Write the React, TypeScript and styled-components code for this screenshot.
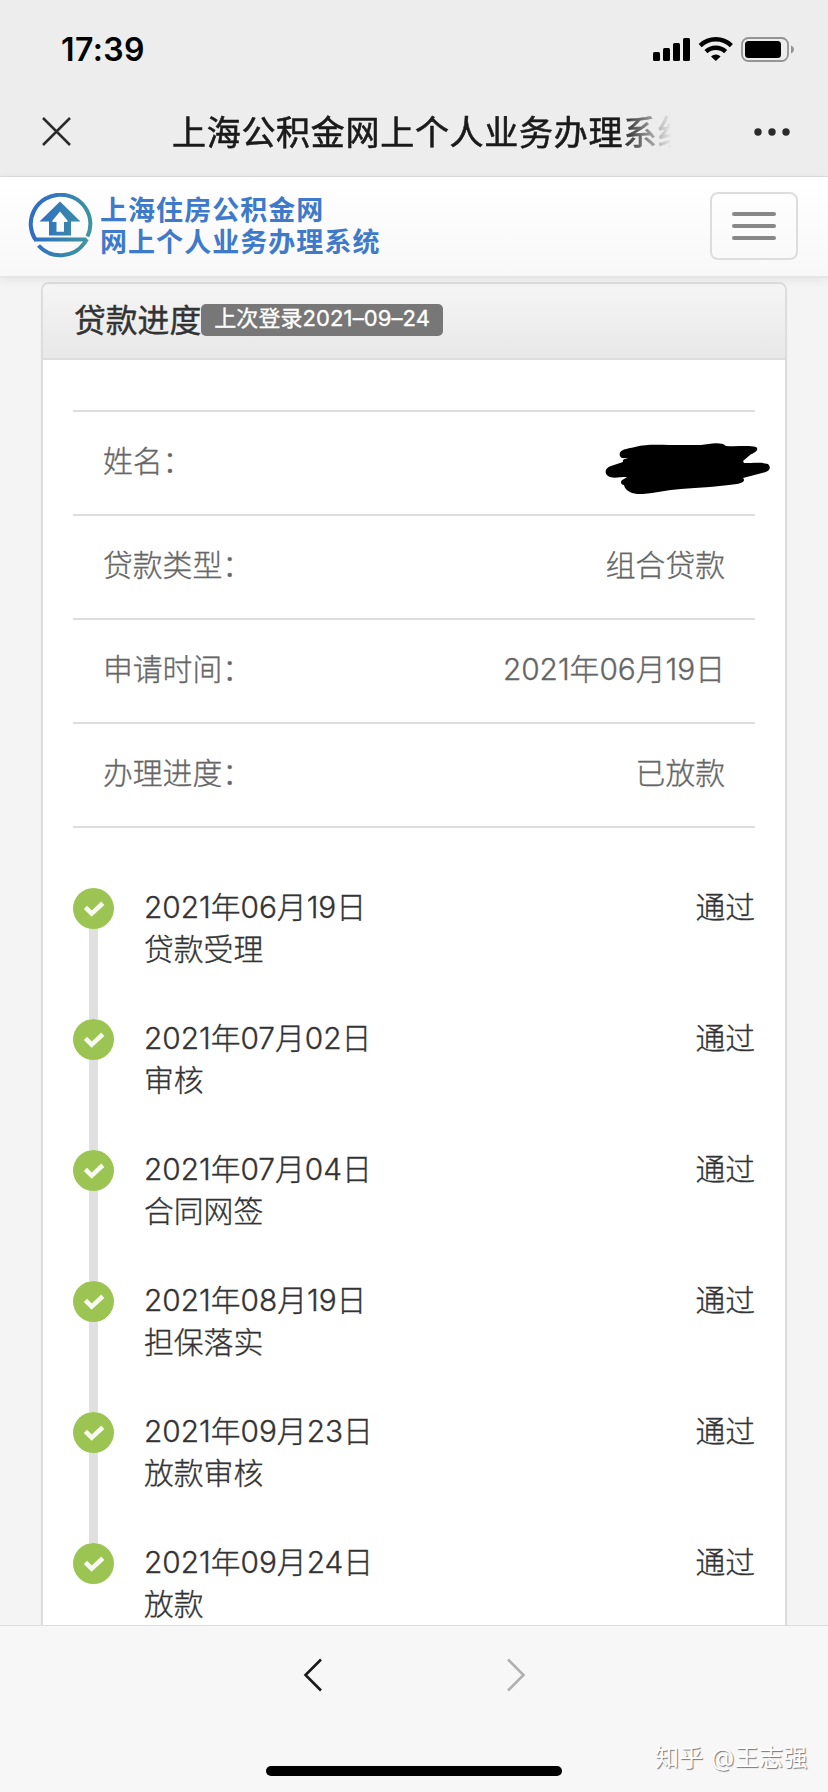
import React from 'react';
import styled, { createGlobalStyle } from 'styled-components';

const GlobalStyle = createGlobalStyle`
  * { box-sizing: border-box; }
  html, body { margin: 0; padding: 0; }
  body {
    background: #f4f4f4;
    font-family: Inter, 'Noto Sans CJK SC', sans-serif;
    overflow: hidden;
  }
`;

const Screen = styled.div`
  position: relative;
  display: flex;
  flex-direction: column;
  width: 828px;
  height: 1792px;
  background: #f4f4f4;
  overflow: hidden;
`;

const StatusBar = styled.div`
  display: flex;
  flex: none;
  justify-content: space-between;
  align-items: center;
  height: 88px;
  padding: 12px 33px 0 61px;
  background: #ededed;
`;

const Clock = styled.span`
  font-size: 32px;
  font-weight: 600;
  line-height: 36px;
  letter-spacing: 0.4px;
  color: #000;
`;

const StatusIcons = styled.svg`
  display: block;
  width: 143px;
  height: 28px;
`;

const NavBar = styled.div`
  display: flex;
  flex: none;
  align-items: center;
  height: 89px;
  padding: 0 37px 0 42px;
  background: #ededed;
  border-bottom: 1px solid #dedede;
`;

const CloseIcon = styled.svg`
  flex: none;
  width: 29px;
  height: 29px;
  margin-top: -1px;
  margin-right: 101px;
`;

const NavTitle = styled.div`
  width: 500px;
  height: 52px;
  margin-top: 2px;
  line-height: 52px;
  overflow: hidden;
  white-space: nowrap;
  font-size: 34px;
  letter-spacing: 0.7px;
  color: #1a1a1a;
  -webkit-text-stroke: 0.6px #1a1a1a;
  mask-image: linear-gradient(to right, #000 448px, transparent 500px);
`;

const MoreIcon = styled.svg`
  flex: none;
  width: 36px;
  height: 8px;
  margin-left: auto;
  margin-right: 1px;
`;

const SiteHeader = styled.header`
  position: relative;
  z-index: 1;
  display: flex;
  flex: none;
  justify-content: space-between;
  align-items: center;
  height: 101px;
  padding: 0 30px 0 27px;
  background: linear-gradient(#ffffff, #f8f8f8);
  border-bottom: 2px solid #e6e6e6;
  box-shadow: 0 2px 9px rgba(0, 0, 0, 0.07);
`;

const Brand = styled.div`
  display: flex;
  align-items: center;
  gap: 7px;
  margin-top: -2px;
`;

const BrandMark = styled.svg`
  width: 66px;
  height: 66px;
`;

const BrandText = styled.div`
  padding-top: 2px;
  font-size: 27px;
  font-weight: 700;
  line-height: 32px;
  letter-spacing: 1.05px;
  color: #3f7aca;
  white-space: nowrap;
`;

const MenuButton = styled.button`
  display: flex;
  flex-direction: column;
  justify-content: center;
  align-items: center;
  gap: 8px;
  width: 88px;
  height: 68px;
  margin-top: -2px;
  padding: 0;
  background: transparent;
  border: 2px solid #ddd;
  border-radius: 8px;
`;

const MenuBar = styled.span`
  width: 44px;
  height: 4px;
  border-radius: 2px;
  background: #888;
`;

const Content = styled.main`
  flex: 1;
  min-height: 0;
  padding: 4px 41px 0;
  overflow: hidden;
`;

const Panel = styled.section`
  height: 1500px;
  border: 2px solid #ddd;
  border-radius: 8px;
  background: #fff;
  box-shadow: 0 2px 2px rgba(0, 0, 0, 0.05);
  overflow: hidden;
`;

const PanelHeader = styled.div`
  display: flex;
  align-items: center;
  height: 76px;
  padding: 0 0 2px 31px;
  background: linear-gradient(#f5f5f5, #e8e8e8);
  border-bottom: 2px solid #ddd;
`;

const PanelTitle = styled.h1`
  margin: 2px 0 0;
  font-size: 31.8px;
  font-weight: 400;
  line-height: 40px;
  color: #333;
  -webkit-text-stroke: 0.4px #333;
`;

const LastLogin = styled.span`
  height: 32px;
  padding: 0 13px 0 13px;
  border-radius: 5px;
  background: #777;
  color: #fff;
  font-size: 22px;
  line-height: 29px;
  letter-spacing: 0.1px;
  white-space: nowrap;
  -webkit-text-stroke: 0.35px #fff;
`;

const Details = styled.dl`
  margin: 50px 30px 0;
  border-top: 2px solid #ddd;
`;

const DetailRow = styled.div`
  display: flex;
  justify-content: space-between;
  align-items: center;
  height: 104px;
  padding: 0 30px 4px;
  border-bottom: 2px solid #ddd;
  font-size: 29.8px;
  font-weight: 300;
  line-height: 42px;
  color: #666;
  -webkit-text-stroke: 0.35px #666;
`;

const Label = styled.dt``;

const Value = styled.dd`
  margin: 0;
`;

const Redaction = styled.svg`
  display: block;
  width: 168px;
  height: 52px;
  margin: 13px -48px 0 0;
`;

const Timeline = styled.ol`
  margin: 60px 30px 0;
  padding: 0;
  list-style: none;
`;

const Step = styled.li`
  display: flex;
  height: 131px;
  font-size: 29.8px;
  font-weight: 300;
  line-height: 42px;
  color: #333;
  -webkit-text-stroke: 0.35px #333;
`;

const Rail = styled.div`
  display: flex;
  flex-direction: column;
  align-items: center;
  width: 41px;
  margin-right: 30px;
`;

const Check = styled.svg`
  flex: none;
  display: block;
  width: 41px;
  height: 41px;
`;

const Connector = styled.span`
  width: 9px;
  flex: 1;
  background: #e0e0e0;
`;

const StepBody = styled.div`
  flex: 1;
  margin-top: -2px;
`;

const StepStatus = styled.div`
  margin-top: -2px;
`;

const Toolbar = styled.nav`
  display: flex;
  flex: none;
  flex-direction: column;
  justify-content: space-between;
  align-items: center;
  height: 167px;
  padding: 32px 0 16px;
  background: #f7f7f7;
  border-top: 1px solid #dcdcdc;
`;

const Arrows = styled.div`
  display: flex;
  gap: 183px;
`;

const Arrow = styled.svg`
  display: block;
  width: 20px;
  height: 34px;
`;

const HomeIndicator = styled.div`
  width: 296px;
  height: 10px;
  border-radius: 5px;
  background: #000;
`;

const Watermark = styled.div`
  position: absolute;
  right: 20px;
  bottom: 17px;
  font-size: 24px;
  line-height: 34px;
  letter-spacing: 0.45px;
  white-space: nowrap;
  color: #fff;
  text-shadow: 1px 1px 1px #777;
`;

const details = [
  { label: '姓名：', value: null },
  { label: '贷款类型：', value: '组合贷款' },
  { label: '申请时间：', value: '2021年06月19日' },
  { label: '办理进度：', value: '已放款' },
];

const steps = [
  { date: '2021年06月19日', name: '贷款受理' },
  { date: '2021年07月02日', name: '审核' },
  { date: '2021年07月04日', name: '合同网签' },
  { date: '2021年08月19日', name: '担保落实' },
  { date: '2021年09月23日', name: '放款审核' },
  { date: '2021年09月24日', name: '放款' },
];

function SystemIcons() {
  return (
    <StatusIcons viewBox="0 0 143 28">
      <rect x="1" y="16" width="7" height="9" rx="1.5" />
      <rect x="11" y="12" width="7" height="13" rx="1.5" />
      <rect x="21" y="7" width="7" height="18" rx="1.5" />
      <rect x="31" y="2" width="7" height="23" rx="1.5" />
      <g fill="none" stroke="#000" strokeWidth="4.4">
        <path d="M48.2 9.6A22.5 22.5 0 0 1 79.4 9.6" />
        <path d="M54 15.7A14.2 14.2 0 0 1 73.6 15.7" />
      </g>
      <path d="M59 20.4A7.2 7.2 0 0 1 68.6 20.4L63.8 25Z" />
      <rect x="90" y="2" width="46" height="23" rx="6.5" fill="none" stroke="#949494" strokeWidth="1.8" />
      <rect x="93" y="5" width="36" height="17" rx="3.5" />
      <path d="M139 9.5C143 11.5 143 15.5 139 17.5Z" fill="#949494" />
    </StatusIcons>
  );
}

function Logo() {
  return (
    <BrandMark viewBox="0 0 66 66">
      <defs>
        <linearGradient id="mark" gradientUnits="userSpaceOnUse" x1="0" y1="20" x2="66" y2="30">
          <stop offset="0.2" stopColor="#2f70c4" />
          <stop offset="1" stopColor="#3f969d" />
        </linearGradient>
      </defs>
      <g fill="none" stroke="url(#mark)" strokeWidth="4">
        <path d="M8.2 46.4A29.8 29.3 0 1 1 60.5 43.5" />
        <path d="M7 46.5H59.5" />
        <path d="M11.5 52.5A29.5 29.5 0 0 0 57.5 49.8L60 46" />
      </g>
      <path
        fill="url(#mark)"
        fillRule="evenodd"
        d="M33 8.5L53.5 28.5H44V42.5H22V28.5H12.5ZM33 18.5L25.5 27.5V29H29.5V38.8H37V29H40.5V27.5Z"
      />
    </BrandMark>
  );
}

function Scribble() {
  return (
    <Redaction viewBox="0 0 168 52">
      <path d="M15 14C13 8 20 7 30 5C42 2 52 3 64 3H96C103 2 111 0 118 2L121 4C131 5 143 3 151 5C155 8 149 11 145 13L138 19L139 21C149 21 157 20 163 22C167 26 164 30 157 31L138 36C141 39 137 41 132 42C117 44 93 46 76 47C62 48 50 51 38 52C28 53 20 49 19 43C16 43 14 39 19 37L22 35C14 35 7 37 3 34C-1 31 0 26 6 24L18 20C17 18 19 17 23 16C19 16 16 17 15 14Z" />
    </Redaction>
  );
}

function CheckMark() {
  return (
    <Check viewBox="0 0 41 41">
      <circle cx="20.5" cy="20.5" r="20.5" fill="#9bc453" />
      <path d="M12.4 19.3L18.7 25.6L29.8 15.2" fill="none" stroke="#f7fbf0" strokeWidth="4.6" />
    </Check>
  );
}

export default function App() {
  return (
    <>
      <GlobalStyle />
      <Screen>
        <StatusBar>
          <Clock>17:39</Clock>
          <SystemIcons />
        </StatusBar>
        <NavBar>
          <CloseIcon viewBox="0 0 29 29">
            <path d="M1 1L28 28M28 1L1 28" stroke="#2b2b2b" strokeWidth="2.5" />
          </CloseIcon>
          <NavTitle>上海公积金网上个人业务办理系统</NavTitle>
          <MoreIcon viewBox="0 0 36 8">
            <circle cx="4" cy="4" r="3.7" fill="#2b2b2b" />
            <circle cx="18" cy="4" r="3.7" fill="#2b2b2b" />
            <circle cx="32" cy="4" r="3.7" fill="#2b2b2b" />
          </MoreIcon>
        </NavBar>
        <SiteHeader>
          <Brand>
            <Logo />
            <BrandText>
              上海住房公积金网
              <br />
              网上个人业务办理系统
            </BrandText>
          </Brand>
          <MenuButton aria-label="菜单">
            <MenuBar />
            <MenuBar />
            <MenuBar />
          </MenuButton>
        </SiteHeader>
        <Content>
          <Panel>
            <PanelHeader>
              <PanelTitle>贷款进度</PanelTitle>
              <LastLogin>上次登录2021–09–24</LastLogin>
            </PanelHeader>
            <Details>
              {details.map(({ label, value }) => (
                <DetailRow key={label}>
                  <Label>{label}</Label>
                  <Value>{value ?? <Scribble />}</Value>
                </DetailRow>
              ))}
            </Details>
            <Timeline>
              {steps.map(({ date, name }, i) => (
                <Step key={date}>
                  <Rail>
                    <CheckMark />
                    {i < steps.length - 1 && <Connector />}
                  </Rail>
                  <StepBody>
                    <div>{date}</div>
                    <div>{name}</div>
                  </StepBody>
                  <StepStatus>通过</StepStatus>
                </Step>
              ))}
            </Timeline>
          </Panel>
        </Content>
        <Toolbar>
          <Arrows>
            <Arrow viewBox="0 0 20 34">
              <path d="M18 1.5L2.5 17L18 32.5" fill="none" stroke="#1a1a1a" strokeWidth="2.6" />
            </Arrow>
            <Arrow viewBox="0 0 20 34">
              <path d="M2 1.5L17.5 17L2 32.5" fill="none" stroke="#b0b0b0" strokeWidth="2.6" />
            </Arrow>
          </Arrows>
          <HomeIndicator />
        </Toolbar>
        <Watermark>知乎 @王志强</Watermark>
      </Screen>
    </>
  );
}
